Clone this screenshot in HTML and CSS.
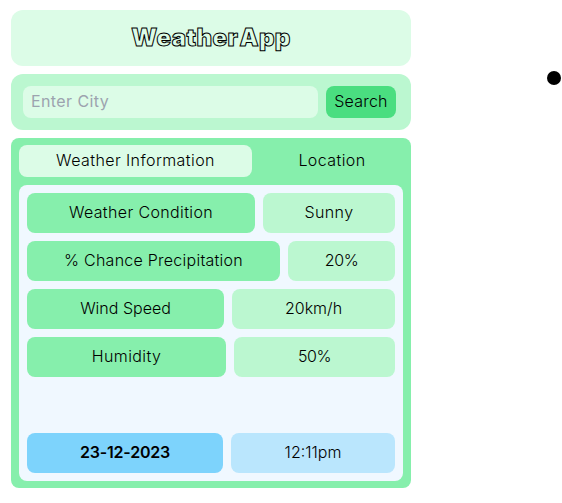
FILE: index.html
```html
<!DOCTYPE html>
<html lang="en">
<head>
<meta charset="utf-8">
<title>Weather App</title>
<link rel="stylesheet" href="styles.css">
</head>
<body>
<main class="app">
  <header class="header"><h1 class="title">Weather App</h1></header>
  <form class="search">
    <input class="city" type="text" placeholder="Enter City" aria-label="City">
    <button class="submit" type="button">Search</button>
  </form>
  <section class="panel">
    <nav class="tabs">
      <a class="tab tab-active">Weather Information</a>
      <a class="tab location">Location</a>
    </nav>
    <div class="details">
      <div class="row condition"><div class="label">Weather Condition</div><div class="value">Sunny</div></div>
      <div class="row rain"><div class="label">% Chance Precipitation</div><div class="value">20%</div></div>
      <div class="row wind"><div class="label">Wind Speed</div><div class="value">20km/h</div></div>
      <div class="row humidity"><div class="label">Humidity</div><div class="value">50%</div></div>
      <div class="row clock"><div class="label date">23-12-2023</div><div class="value time">12:11pm</div></div>
    </div>
  </section>
</main>
<div class="dot"></div>
</body>
</html>
```
FILE: styles.css
```css
* { box-sizing: border-box; }
body {
  margin: 0;
  padding: 10px 0 0 11px;
  display: flex;
  align-items: flex-start;
  background: #fff;
  color: #000;
  font: 300 16px/24px Inter, "Liberation Sans", sans-serif;
  overflow: hidden;
}
.app {
  width: 400px;
  flex: none;
  display: flex;
  flex-direction: column;
  gap: 8px;
}
.header {
  height: 56px;
  display: flex;
  align-items: center;
  justify-content: center;
  border-radius: 12px;
  background: #dcfce7;
}
.title {
  margin: 0;
  font: 900 24px/32px Inter, sans-serif;
  letter-spacing: 0.4px;
  word-spacing: -4px;
  color: #dcfce7;
  -webkit-text-stroke: 1px #000;
}
.search {
  height: 56px;
  padding: 12px 15px 12px 12px;
  display: flex;
  gap: 8px;
  border-radius: 12px;
  background: #bbf7d0;
}
.city, .submit {
  height: 32px;
  padding: 0 8px 2px;
  border: 0;
  border-radius: 8px;
  font: inherit;
  color: inherit;
}
.city { flex: 1; min-width: 0; background: #dcfce7; letter-spacing: 0.4px; }
.city::placeholder { color: #9ca3af; opacity: 1; font-weight: 400; }
.submit { width: 70px; background: #4ade80; letter-spacing: 0.2px; }
.panel {
  height: 350px;
  padding: 7px 8px;
  display: flex;
  flex-direction: column;
  gap: 8px;
  border-radius: 8px;
  background: #86efac;
}
.tabs { display: flex; height: 32px; letter-spacing: 0.42px; }
.tab {
  display: flex;
  align-items: center;
  justify-content: center;
  padding-bottom: 2px;
  border-radius: 8px;
}
.tab-active { width: 233px; background: #dcfce7; }
.location { flex: 1; padding-left: 9px; }
.details {
  flex: 1;
  padding: 8px;
  display: flex;
  flex-direction: column;
  gap: 8px;
  border-radius: 8px;
  background: #f0f8ff;
}
.row { display: flex; gap: 8px; height: 40px; }
.label, .value {
  display: flex;
  align-items: center;
  justify-content: center;
  padding-bottom: 2px;
  border-radius: 8px;
  white-space: nowrap;
}
.label { background: #86efac; }
.value { flex: 1; background: #bbf7d0; }
.condition { letter-spacing: 0.37px; }
.condition .label { width: 228px; }
.rain .label { width: 253px; letter-spacing: 0.25px; }
.rain .value, .humidity .value { letter-spacing: -0.4px; }
.wind .label { width: 197px; }
.humidity .label { width: 199px; letter-spacing: 0.4px; }
.clock { margin-top: auto; }
.date { width: 196px; background: #7dd3fc; font-weight: 600; letter-spacing: -0.2px; }
.time { background: #bae6fd; }
.dot {
  width: 14px;
  height: 14px;
  margin: 61px 0 0 136px;
  flex: none;
  border-radius: 50%;
  background: #000;
}
```
